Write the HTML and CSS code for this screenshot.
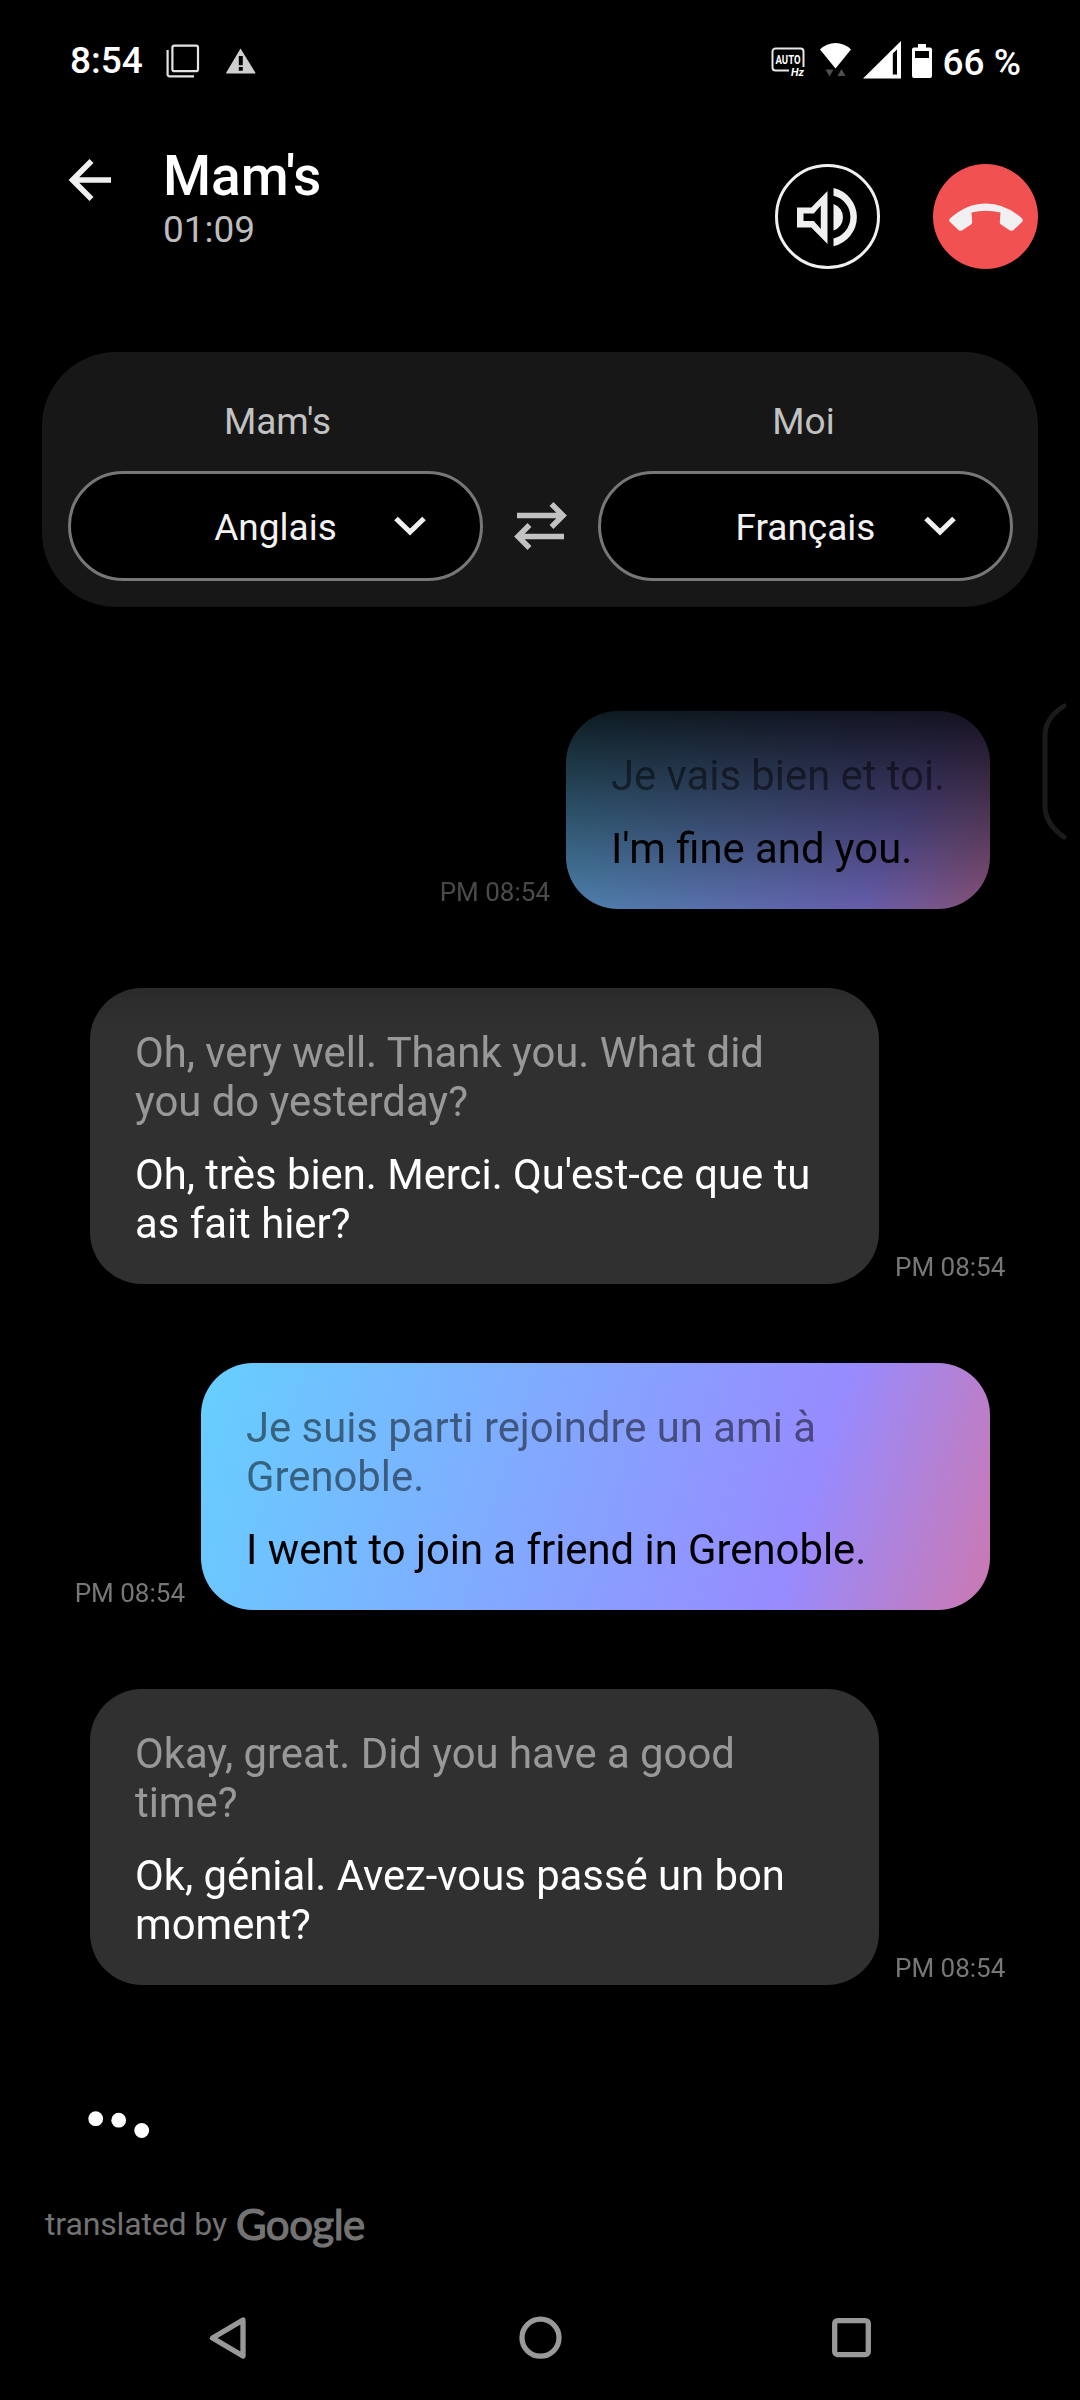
FILE: index.html
```html
<!DOCTYPE html>
<html lang="fr">
<head>
<meta charset="utf-8">
<title>Mam's</title>
<link rel="stylesheet" href="styles.css">
</head>
<body>
<div class="screen">
  <div class="status">
    <span class="clock">8:54</span>
    <svg class="ic-pages" width="34" height="34" viewBox="0 0 34 34" fill="none" stroke="#e4e4e4" stroke-width="2.2"><rect x="6.4" y="1.6" width="25.6" height="25.6" rx="2"/><path d="M1.6 6v24.400a2 2 0 0 0 2 2H28"/></svg>
    <svg class="ic-warn" width="30" height="26" viewBox="0 0 30 26"><path fill="#cfcfcf" fill-rule="evenodd" d="M14.500.500 29.300 24.600q.4 1-.7 1H.9q-1.100 0-.6-1zM12.800 8v9.300h4V8zm0 11v3.800h4V19z"/></svg>
    <svg class="ic-hz" width="38" height="34" viewBox="0 0 38 34"><path d="M18 23.500H4.500a3 3 0 0 1-3-3V4.500a3 3 0 0 1 3-3h25a3 3 0 0 1 3 3V20" fill="none" stroke="#e8e8e8" stroke-width="2"/><text x="17" y="16.600" class="hz-auto" textLength="25" lengthAdjust="spacingAndGlyphs">AUTO</text><text x="26.500" y="28.500" class="hz-unit">Hz</text></svg>
    <svg class="ic-wifi" width="32" height="35" viewBox="0 0 32 35"><path fill="#fff" d="M0 6.500Q6.500 0 15.500 0T31 6.500L15.500 25.500z"/><path fill="#4f4f4f" d="M5.500 26.500h8l-4 7zM17.500 33l4-7 4 7z"/></svg>
    <svg class="ic-signal" width="38" height="38" viewBox="0 0 38 38"><path fill="#fff" fill-rule="evenodd" d="M0 37.500 38 0v37.500zM29.800 12.500V33.500H34V8.500z"/></svg>
    <svg class="ic-battery" width="20" height="34" viewBox="0 0 20 34"><path fill="#fff" fill-rule="evenodd" d="M6 0h8v3.500h4a2 2 0 0 1 2 2V32a2 2 0 0 1-2 2H2a2 2 0 0 1-2-2V5.500a2 2 0 0 1 2-2h4zM3 7v7h14V7z"/></svg>
    <span class="percent">66 %</span>
  </div>

  <header class="header">
    <svg class="back" width="48" height="48" viewBox="0 0 48 48" fill="none" stroke="#efefef" stroke-width="5.600"><path d="M45 24H6M25.500 5 6.500 24l19 19"/></svg>
    <div class="who">
      <h1 class="name">Mam's</h1>
      <div class="duration">01:09</div>
    </div>
    <div class="round speaker">
      <svg width="61" height="60" viewBox="0 0 61 60"><path fill="#f0f0f0" fill-rule="evenodd" d="M0 20.500h14.300L30.500 4v53L14.300 40.500H0zM6.500 26.500v7.500h10.300l7 8V18.500l-7 8z"/><path fill="#f0f0f0" d="M36.500 17a14 14 0 0 1 0 26.500zM36.500 1a29.800 29.800 0 0 1 0 58.200v-7.700a22 22 0 0 0 0-42.800z"/></svg>
    </div>
    <div class="round hangup">
      <svg width="74" height="28" viewBox="0 0 74 28"><path fill="#f0f0f0" d="M1 15.500Q17.500.500 37 .500T73 15.500q1.500 1.700 0 3.500L64.500 27q-1.600 1.500-3.500.400L52 21.500q-1.300-.9-1.200-2.500L51.500 9.500Q37 6 22.500 9.500L23.200 19q.1 1.600-1.200 2.500L13 27.400q-1.900 1.100-3.500-.4L1 19q-1.500-1.800 0-3.500z"/></svg>
    </div>
  </header>

  <section class="languages">
    <div class="side">
      <div class="label them">Mam's</div>
      <div class="select"><span class="value">Anglais</span><svg class="chevron" width="32" height="20" viewBox="0 0 32 20"><path d="M2 2.500 16 16 30 2.500" fill="none" stroke="#f0f0f0" stroke-width="5.200"/></svg></div>
    </div>
    <svg class="swap" width="53" height="48" viewBox="0 0 53 48" fill="none" stroke="#c2c2c2" stroke-width="5.500"><path d="M3 13.500H49M37.500 2 49 13.500 37.500 25M50 34.500H4M15.500 23 4 34.500 15.500 46"/></svg>
    <div class="side">
      <div class="label me">Moi</div>
      <div class="select"><span class="value">Français</span><svg class="chevron" width="32" height="20" viewBox="0 0 32 20"><path d="M2 2.500 16 16 30 2.500" fill="none" stroke="#f0f0f0" stroke-width="5.200"/></svg></div>
    </div>
  </section>

  <main class="chat">
    <div class="row mine">
      <span class="time">PM 08:54</span>
      <div class="bubble short"><p class="source">Je vais bien et toi.</p><p class="result">I'm fine and you.</p></div>
    </div>
    <div class="row theirs">
      <div class="bubble"><p class="source">Oh, very well. Thank you. What did<br>you do yesterday?</p><p class="result">Oh, très bien. Merci. Qu'est-ce que tu<br>as fait hier?</p></div>
      <span class="time">PM 08:54</span>
    </div>
    <div class="row mine">
      <span class="time">PM 08:54</span>
      <div class="bubble"><p class="source">Je suis parti rejoindre un ami à<br>Grenoble.</p><p class="result">I went to join a friend in Grenoble.</p></div>
    </div>
    <div class="row theirs">
      <div class="bubble"><p class="source">Okay, great. Did you have a good<br>time?</p><p class="result">Ok, génial. Avez-vous passé un bon<br>moment?</p></div>
      <span class="time">PM 08:54</span>
    </div>
    <svg class="typing" width="62" height="30" viewBox="0 0 62 30" fill="#fff"><circle cx="7.700" cy="8.700" r="7.400"/><circle cx="30.700" cy="10.200" r="7.400"/><circle cx="53.700" cy="20.500" r="7.400"/></svg>
  </main>

  <div class="credit"><span>translated by</span><span class="brand">Google</span></div>

  <nav class="navbar">
    <svg width="44" height="44" viewBox="0 0 44 44"><path d="M6.500 22 37 4v36z"/></svg>
    <svg width="44" height="44" viewBox="0 0 44 44"><circle cx="22.500" cy="21.700" r="18.500"/></svg>
    <svg width="44" height="44" viewBox="0 0 44 44"><rect x="4.700" y="4.600" width="33.600" height="34" rx="3"/></svg>
  </nav>

  <svg class="edge-handle" width="26" height="140" viewBox="0 0 26 140" fill="none" stroke="#1b1b1b" stroke-width="5" stroke-linecap="round"><path d="M22 4Q3 16 3 34V104Q3 122 22 135"/></svg>
</div>
</body>
</html>
```

FILE: styles.css
```css
* { box-sizing: border-box; }
body { margin: 0; background: #000; }
h1, p { margin: 0; font-weight: 400; }
svg { display: block; flex: none; }

.screen {
  position: relative;
  display: flex;
  flex-direction: column;
  width: 1080px;
  height: 2400px;
  overflow: hidden;
  background: #000;
  color: #fff;
  font-family: Roboto, sans-serif;
}

/* status bar */
.status {
  display: flex;
  align-items: center;
  height: 121px;
  padding: 0 59px 0 70px;
  font-size: 37px;
  font-weight: 500;
  line-height: 44px;
}
.clock { width: 96px; }
.ic-warn { margin-left: 26px; }
.ic-hz { margin-left: auto; margin-top: 7px; }
.hz-auto, .hz-unit {
  fill: #fff;
  font-family: Roboto, sans-serif;
  font-weight: 700;
  text-anchor: middle;
}
.hz-auto { font-size: 12px; }
.hz-unit { font-size: 11px; font-style: italic; }
.ic-wifi { margin-left: 11px; }
.ic-signal { margin-left: 11px; margin-top: -2px; }
.ic-battery { margin-left: 11px; }
.percent { margin: 4px 0 0 11px; white-space: nowrap; }

/* call header */
.header {
  display: flex;
  align-items: flex-start;
  height: 231px;
  padding: 23px 42px 0 66px;
}
.back { margin-top: 12px; }
.who { flex: 1; margin-left: 49px; }
.name { padding-top: 1px; font-size: 55px; font-weight: 500; line-height: 63px; }
.duration { font-size: 37px; line-height: 44px; color: #bdbdbd; }
.round {
  display: flex;
  align-items: center;
  justify-content: center;
  width: 105px;
  height: 105px;
  margin-top: 20px;
  border-radius: 50%;
}
.speaker { border: 3px solid #f0f0f0; }
.hangup { margin-left: 53px; background: #f25152; }

/* language picker */
.languages {
  display: grid;
  grid-template-columns: 415px 115px 415px;
  height: 255px;
  margin: 0 42px;
  padding: 48px 25px 26px 26px;
  border-radius: 74px;
  background: #171717;
}
.side { display: flex; flex-direction: column; gap: 27px; }
.label {
  font-size: 37px;
  line-height: 44px;
  text-align: center;
  color: #c2c2c2;
}
.label.them { padding-left: 4px; }
.label.me { padding-right: 4px; }
.select {
  display: grid;
  grid-template-columns: 1fr auto 1fr;
  align-items: center;
  height: 110px;
  border: 3px solid #777;
  border-radius: 55px;
  background: #000;
  color: #f2f2f2;
  font-size: 37px;
  line-height: 44px;
}
.value { grid-column: 2; padding-top: 3px; }
.chevron { justify-self: end; margin-right: 54px; }
.swap { align-self: end; justify-self: center; margin-bottom: 31px; }

/* conversation, fading out under the picker */
.chat {
  display: flex;
  flex-direction: column;
  gap: 79px;
  height: 1500px;
  margin-top: 56px;
  padding: 48px 90px 0;
  mask-image: linear-gradient(transparent 0, #000 367px);
}
.row { display: flex; align-items: flex-end; gap: 16px; white-space: nowrap; }
.mine { justify-content: flex-end; margin-left: -30px; }
.time { margin-bottom: 1px; font-size: 26px; line-height: 32px; color: #777; }
.theirs { margin-right: -30px; }
.bubble {
  display: flex;
  flex: none;
  flex-direction: column;
  gap: 24px;
  width: 789px;
  padding: 40px 45px 36px;
  border-radius: 52px;
  background: #303030;
  font-size: 41.8px;
  line-height: 49px;
}
.bubble.short { width: 424px; }
.source { color: rgba(255, 255, 255, 0.5); }
.mine .bubble {
  background: linear-gradient(107.4deg, #66cfff, #978bff 75%, #cc78b0);
  color: #000;
}
.mine .bubble.short { background: linear-gradient(115deg, #66cfff, #978bff 75%, #cc78b0); }
.mine .source { color: rgba(0, 0, 0, 0.5); }
.typing { margin: 46px 0 0 -2px; }

/* attribution */
.credit {
  display: flex;
  align-items: flex-start;
  gap: 9px;
  height: 60px;
  margin: 31px 0 0 45px;
  font-size: 32px;
  line-height: 60px;
  letter-spacing: -0.15px;
  color: #737373;
}
.brand {
  font-family: Lato, sans-serif;
  font-size: 42px;
  font-weight: 400;
  letter-spacing: -0.5px;
  -webkit-text-stroke: 1.2px #737373;
}

/* system navigation */
.navbar {
  display: flex;
  justify-content: space-between;
  margin: 62px 206px 0;
}
.navbar svg { fill: none; stroke: #999; stroke-width: 5.3; stroke-linejoin: round; }

.edge-handle { position: absolute; top: 702px; left: 1042px; }
```
